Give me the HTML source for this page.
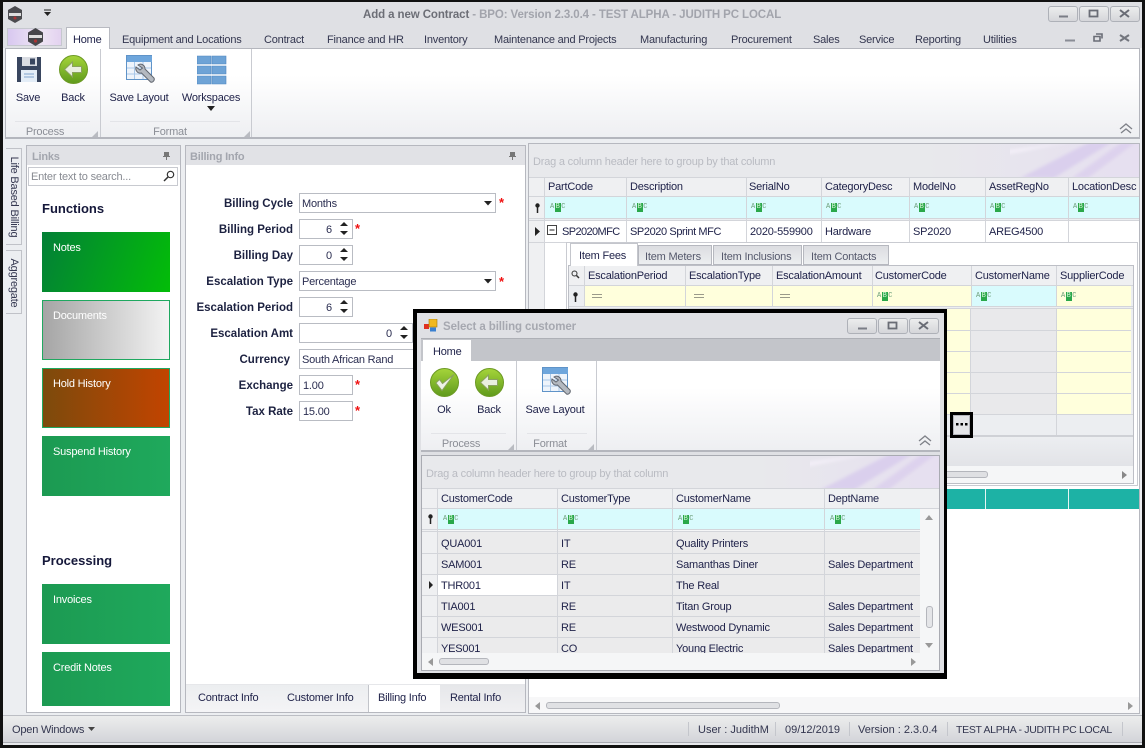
<!DOCTYPE html>
<html><head><meta charset="utf-8"><title>Add a new Contract</title>
<style>
html,body{margin:0;padding:0;background:#000}
#p{position:relative;width:1145px;height:748px;overflow:hidden;background:#eceef1;font:11px/14px "Liberation Sans",sans-serif;letter-spacing:-.2px;color:#20234a}
#p div,#p svg{position:absolute}
.t{white-space:nowrap;margin-top:1px}
.c{white-space:nowrap;text-align:center;transform:translateX(-50%);margin-top:1px}
.g{color:#8b8e96}
.lb{white-space:nowrap;font-weight:bold;font-size:11.5px;letter-spacing:0;color:#1c2140;right:852px}
.box{background:#fff;border:1px solid #b9bcc3;box-sizing:border-box;height:20px}
.in{white-space:nowrap;color:#2a2d50;margin-top:1px}
.red{color:#f01010;font-weight:bold;font-size:13px;white-space:nowrap;margin-top:1px}
.tile{left:42px;width:128px;height:60px;box-sizing:border-box;color:#fff;padding:9px 11px}
.gn{background:linear-gradient(90deg,#1c9a52,#1fa95c)}
.h{height:1px;background:#d3d5da}
.v{width:1px;background:#d3d5da}
.abc{white-space:nowrap;font:7px/9px "Liberation Mono",monospace;color:#6b9e78;letter-spacing:0;height:9px}
.abc b{display:inline-block;width:6px;height:9px;text-align:center;background:#2aa84a;color:#d8f5d8;font-weight:normal;margin:0 .5px;vertical-align:top}
.wb{border:1px solid #aeb1b8;border-radius:3px;box-sizing:border-box;background:linear-gradient(#eceded,#d5d6da);height:16px;width:30px}
.st{height:14px;width:1px;background:#c4c6cc;top:722px}
.sb{letter-spacing:0;color:#33364f}
</style></head><body><div id="p">
<svg width="0" height="0" style="left:0;top:0"><defs>
<linearGradient id="gb" x1="0" y1="0" x2="0" y2="1"><stop offset="0" stop-color="#a5d43a"/><stop offset="1" stop-color="#5f9a1c"/></linearGradient>
<filter id="bl" x="-20%" y="-20%" width="140%" height="140%"><feGaussianBlur stdDeviation="1.5"/></filter>
<g id="back"><circle cx="14.5" cy="14.5" r="14" fill="url(#gb)" stroke="#6d9a25"/><path d="M5.500 14.500 13.500 7v4.500h9v6h-9V22Z" fill="#e9efdf" stroke="#8aa25e"/></g>
<g id="ok"><circle cx="14.5" cy="14.5" r="14" fill="url(#gb)" stroke="#6d9a25"/><path d="M6 15 12 22.500 24 6.500 12.500 15.500 9.500 11.500Z" fill="#eef2e6" stroke="#8aa25e"/></g>
<g id="lay"><rect x=".5" y=".5" width="25" height="24" fill="#eef4fb" stroke="#5f93c8"/><rect x="1" y="1" width="25" height="6" fill="#6ea6dc"/><path d="M1 13H25M1 19H25M8.500 7V24M17 7V24" stroke="#a9c8e8" fill="none"/><path d="M12 10c3-2 7 0 7 4l9 9c1 2-1 5-3.500 4l-9-9c-4 1-6.500-3-5.500-6l4 3 2.500-2Z" fill="#b4b9c0" stroke="#60656e"/></g>
<g id="key"><circle cx="3.500" cy="2.500" r="2.200" fill="#222"/><path d="M3.500 4V10" stroke="#222" stroke-width="1.500"/></g>
<g id="swg" filter="url(#bl)"><path d="M10 34 80 -2H102L44 34Z" fill="#d6c8ec" opacity=".75"/><path d="M62 34 112 -2H126L78 34Z" fill="#d9ccec" opacity=".7"/><path d="M-50 12 60 -2 0 10Z" fill="#f3eff8"/></g>
</defs></svg>

<!-- frame -->
<div style="left:0;top:0;width:1145px;height:2px;background:#111"></div>
<div style="left:0;top:0;width:3px;height:748px;background:#111"></div>
<div style="left:1142px;top:0;width:3px;height:748px;background:#111"></div>
<div style="left:3px;top:2px;width:1139px;height:46px;background:#dfe0e4"></div>

<!-- titlebar -->
<svg style="left:6px;top:5px" width="18" height="19"><path d="M9 1 16 5V14L9 18 2 14V5Z" fill="#4b4b4f"/><rect x="3" y="8" width="12" height="3" fill="#ddd"/><circle cx="9" cy="13" r="1.500" fill="#a33"/></svg>
<svg style="left:43px;top:9px" width="9" height="8"><path d="M1 .5H8V1.500H1Z M1 3H8L4.500 7Z" fill="#222"/></svg>
<div class="t" style="left:363px;top:7px;font-weight:bold;color:#6c6e76;font-size:11.5px;letter-spacing:-.1px">Add a new Contract<span style="color:#a2a4ac"> - BPO: Version 2.3.0.4 - TEST ALPHA - JUDITH PC LOCAL</span></div>
<div class="wb" style="left:1048px;top:6px"></div><div class="wb" style="left:1079px;top:6px"></div><div class="wb" style="left:1110px;top:6px"></div>
<svg style="left:1048px;top:6px" width="92" height="16"><path d="M11 10.500H20" stroke="#7a7d86" stroke-width="2"/><rect x="41.500" y="4.500" width="8" height="6" fill="none" stroke="#6a6d76" stroke-width="1.800"/><path d="M72 4 81 11M81 4 72 11" stroke="#6a6d76" stroke-width="2"/></svg>
<svg style="left:1062px;top:31px" width="76" height="15"><path d="M3 9.500H13" stroke="#8a8d96" stroke-width="2"/><path d="M32 5.500H38V10H32Z M34 3H40V7.500" fill="none" stroke="#6a6d76" stroke-width="1.600"/><path d="M58 4 67 10M67 4 58 10" stroke="#73767e" stroke-width="2"/></svg>

<!-- ribbon tabs -->
<div style="left:7px;top:28px;width:55px;height:18px;background:linear-gradient(90deg,#d8c8f0,#efe6f4 60%,#e3d2f0);border:1px solid #c6c8cf;box-sizing:border-box"></div>
<svg style="left:26px;top:27px" width="19" height="20"><path d="M9.500 1 17 5.500V14.500L9.500 19 2 14.500V5.500Z" fill="#46464a"/><rect x="3" y="8" width="13" height="3" fill="#ddd"/><circle cx="9.500" cy="14" r="1.600" fill="#a33"/></svg>
<div style="left:66px;top:27px;width:44px;height:22px;background:#fff;border:1px solid #b8bac1;border-bottom:0;box-sizing:border-box;z-index:2"></div>
<div class="t" style="left:73px;top:32px;z-index:3">Home</div>
<div class="t" style="left:122px;top:32px;color:#33364f">Equipment and Locations</div>
<div class="t" style="left:264px;top:32px;color:#33364f">Contract</div>
<div class="t" style="left:327px;top:32px;color:#33364f">Finance and HR</div>
<div class="t" style="left:424px;top:32px;color:#33364f">Inventory</div>
<div class="t" style="left:494px;top:32px;color:#33364f">Maintenance and Projects</div>
<div class="t" style="left:640px;top:32px;color:#33364f">Manufacturing</div>
<div class="t" style="left:731px;top:32px;color:#33364f">Procurement</div>
<div class="t" style="left:813px;top:32px;color:#33364f">Sales</div>
<div class="t" style="left:859px;top:32px;color:#33364f">Service</div>
<div class="t" style="left:915px;top:32px;color:#33364f">Reporting</div>
<div class="t" style="left:983px;top:32px;color:#33364f">Utilities</div>

<!-- ribbon body -->
<div style="left:5px;top:48px;width:1135px;height:91px;background:linear-gradient(#fff 30%,#eeeff2);border:1px solid #b4b6bd;border-width:1px 1px 2px 1px;box-sizing:border-box"></div>
<div class="v" style="left:100px;top:49px;height:88px;background:#c9cbd1"></div>
<div class="v" style="left:251px;top:49px;height:88px;background:#c9cbd1"></div>
<div class="h" style="left:15px;top:121px;width:75px;background:#e3e4e8"></div>
<div class="h" style="left:110px;top:121px;width:130px;background:#e3e4e8"></div>
<svg style="left:16px;top:56px" width="26" height="27"><path d="M1 1H25V26H1Z" fill="#39465f"/><rect x="6" y="1" width="15" height="9" fill="#d9dce2"/><rect x="14" y="2.500" width="5" height="6" fill="#39465f"/><rect x="5" y="14" width="16" height="12" fill="#e3edf7"/><path d="M8 18H18M8 21H18" stroke="#7fa3cc"/></svg>
<svg style="left:59px;top:55px" width="30" height="30"><use href="#back"/></svg>
<svg style="left:126px;top:55px" width="30" height="30"><use href="#lay"/></svg>
<svg style="left:197px;top:55px" width="30" height="30"><path d="M0 1H14V9H0ZM15 1H29V9H15ZM0 11H14V19H0ZM15 11H29V19H15ZM0 21H14V29H0ZM15 21H29V29H15Z" fill="#6ea3d6" stroke="#4d86bf" stroke-width=".6"/></svg>
<div class="c" style="left:28px;top:90px">Save</div>
<div class="c" style="left:73px;top:90px">Back</div>
<div class="c" style="left:139px;top:90px">Save Layout</div>
<div class="c" style="left:211px;top:90px">Workspaces</div>
<svg style="left:207px;top:106px" width="9" height="6"><path d="M0 0H8L4 5Z" fill="#222"/></svg>
<div class="c g" style="left:45px;top:124px">Process</div>
<div class="c g" style="left:170px;top:124px">Format</div>
<svg style="left:91px;top:130px" width="8" height="8"><path d="M7 1V7H1Z" fill="#b9bbc1"/></svg>
<svg style="left:243px;top:130px" width="8" height="8"><path d="M7 1V7H1Z" fill="#b9bbc1"/></svg>
<svg style="left:1119px;top:123px" width="14" height="12"><path d="M1 6 7 1 13 6M2 10 7 6 12 10" fill="none" stroke="#7e8188" stroke-width="1.300"/></svg>

<!-- side tabs -->
<div style="left:6px;top:148px;width:16px;height:97px;background:#eceef1;border:1px solid #c0c2c8;border-left:0;box-sizing:border-box"></div>
<div style="left:6px;top:250px;width:16px;height:64px;background:#eceef1;border:1px solid #c0c2c8;border-left:0;box-sizing:border-box"></div>
<div class="t" style="left:14px;top:196px;transform:translate(-50%,-50%) rotate(90deg);color:#33364f">Life Based Billing</div>
<div class="t" style="left:14px;top:282px;transform:translate(-50%,-50%) rotate(90deg);color:#33364f">Aggregate</div>

<!-- links panel -->
<div style="left:26px;top:145px;width:155px;height:568px;background:#fff;border:1px solid #b6b8bf;box-sizing:border-box"></div>
<div style="left:27px;top:146px;width:153px;height:19px;background:#e1e2e6"></div>
<div class="t" style="left:32px;top:149px;font-weight:bold;color:#a3a6ae">Links</div>
<svg style="left:162px;top:151px" width="9" height="10"><path d="M2 1H7V5H8V6H5V9H4V6H1V5H2Z" fill="#777"/></svg>
<div style="left:28px;top:167px;width:150px;height:19px;background:#fff;border:1px solid #c8cad0;box-sizing:border-box"></div>
<div class="t" style="left:31px;top:169px;color:#888b92">Enter text to search...</div>
<svg style="left:163px;top:170px" width="12" height="13"><circle cx="7.500" cy="4.500" r="3.200" fill="none" stroke="#333" stroke-width="1.200"/><path d="M5 7 1 11" stroke="#333" stroke-width="1.500"/></svg>
<div class="t" style="left:42px;top:201px;font-weight:bold;font-size:13px;letter-spacing:0;color:#15183a">Functions</div>
<div class="tile" style="top:232px;background:linear-gradient(110deg,#038037,#03bd08)">Notes</div>
<div class="tile" style="top:300px;background:linear-gradient(90deg,#a5a5a5,#f3f3f3);border:1px solid #1fa860;padding:8px 10px">Documents</div>
<div class="tile" style="top:368px;background:linear-gradient(90deg,#7c4a0c,#c24400);border:1px solid #1fa860;padding:8px 10px">Hold History</div>
<div class="tile gn" style="top:436px">Suspend History</div>
<div class="t" style="left:42px;top:553px;font-weight:bold;font-size:13px;letter-spacing:0;color:#15183a">Processing</div>
<div class="tile gn" style="top:584px">Invoices</div>
<div class="tile gn" style="top:652px;height:54px">Credit Notes</div>

<!-- billing panel -->
<div style="left:185px;top:145px;width:341px;height:568px;background:#fff;border:1px solid #b6b8bf;box-sizing:border-box"></div>
<div style="left:186px;top:146px;width:339px;height:19px;background:#e1e2e6"></div>
<div class="t" style="left:190px;top:149px;font-weight:bold;color:#a3a6ae">Billing Info</div>
<svg style="left:508px;top:151px" width="9" height="10"><path d="M2 1H7V5H8V6H5V9H4V6H1V5H2Z" fill="#777"/></svg>

<div class="lb" style="top:197px">Billing Cycle</div>
<div class="lb" style="top:223px">Billing Period</div>
<div class="lb" style="top:249px">Billing Day</div>
<div class="lb" style="top:275px">Escalation Type</div>
<div class="lb" style="top:301px">Escalation Period</div>
<div class="lb" style="top:327px">Escalation Amt</div>
<div class="lb" style="top:353px;right:855px">Currency</div>
<div class="lb" style="top:379px">Exchange</div>
<div class="lb" style="top:405px">Tax Rate</div>

<div class="box" style="left:299px;top:193px;width:197px"></div><div class="in" style="left:302px;top:196px">Months</div>
<svg style="left:484px;top:201px" width="9" height="5"><path d="M0 0H8L4 4.500Z" fill="#222"/></svg>
<div class="red" style="left:499px;top:195px">*</div>
<div class="box" style="left:299px;top:219px;width:54px"></div><div class="in" style="left:326px;top:222px">6</div>
<svg style="left:340px;top:222px" width="9" height="14"><path d="M0 4 4 0 8 4ZM0 9H8L4 13Z" fill="#222"/></svg>
<div class="red" style="left:355px;top:221px">*</div>
<div class="box" style="left:299px;top:245px;width:54px"></div><div class="in" style="left:326px;top:248px">0</div>
<svg style="left:340px;top:248px" width="9" height="14"><path d="M0 4 4 0 8 4ZM0 9H8L4 13Z" fill="#222"/></svg>
<div class="box" style="left:299px;top:271px;width:197px"></div><div class="in" style="left:302px;top:274px">Percentage</div>
<svg style="left:484px;top:279px" width="9" height="5"><path d="M0 0H8L4 4.500Z" fill="#222"/></svg>
<div class="red" style="left:499px;top:274px">*</div>
<div class="box" style="left:299px;top:297px;width:54px"></div><div class="in" style="left:326px;top:300px">6</div>
<svg style="left:340px;top:300px" width="9" height="14"><path d="M0 4 4 0 8 4ZM0 9H8L4 13Z" fill="#222"/></svg>
<div class="box" style="left:299px;top:323px;width:114px"></div><div class="in" style="left:386px;top:326px">0</div>
<svg style="left:400px;top:326px" width="9" height="14"><path d="M0 4 4 0 8 4ZM0 9H8L4 13Z" fill="#222"/></svg>
<div class="box" style="left:299px;top:349px;width:197px"></div><div class="in" style="left:302px;top:352px">South African Rand</div>
<div class="box" style="left:299px;top:375px;width:54px"></div><div class="in" style="left:303px;top:378px">1.00</div>
<div class="red" style="left:355px;top:377px">*</div>
<div class="box" style="left:299px;top:401px;width:54px"></div><div class="in" style="left:303px;top:404px">15.00</div>
<div class="red" style="left:355px;top:403px">*</div>

<div style="left:186px;top:684px;width:339px;height:28px;background:#fff;border-top:1px solid #e6e7ea;box-sizing:border-box"></div>
<div style="left:186px;top:685px;width:183px;height:27px;background:linear-gradient(#eceef0,#f4f4f6);border-right:1px solid #c2c4ca;box-sizing:border-box"></div>
<div style="left:440px;top:685px;width:85px;height:27px;background:linear-gradient(#e6e7ea,#f0f0f2)"></div>
<div class="t" style="left:198px;top:690px">Contract Info</div>
<div class="t" style="left:287px;top:690px">Customer Info</div>
<div class="t" style="left:378px;top:690px">Billing Info</div>
<div class="t" style="left:450px;top:690px">Rental Info</div>

<!-- right panel -->
<div style="left:528px;top:143px;width:612px;height:571px;background:#fff;border:1px solid #b6b8bf;box-sizing:border-box"></div>
<div style="left:529px;top:144px;width:610px;height:33px;background:linear-gradient(90deg,#e8e9ec 65%,#e6dff0);overflow:hidden"></div>
<svg style="left:1010px;top:144px" width="129" height="33"><use href="#swg"/></svg>
<div class="t" style="left:533px;top:154px;color:#b9bbc2">Drag a column header here to group by that column</div>

<div style="left:529px;top:177px;width:610px;height:20px;background:#eff0f2;border-top:1px solid #d3d5da;border-bottom:1px solid #d3d5da;box-sizing:border-box"></div>
<div style="left:544px;top:197px;width:595px;height:21px;background:#d9fbfd"></div>
<div style="left:529px;top:197px;width:15px;height:21px;background:#eff0f2"></div>
<div class="h" style="left:529px;top:218px;width:610px"></div>
<div style="left:529px;top:219px;width:610px;height:2px;background:#eceef1"></div>
<div class="h" style="left:529px;top:220px;width:610px"></div>
<div style="left:529px;top:221px;width:15px;height:88px;background:#eff0f2"></div>
<div class="h" style="left:529px;top:242px;width:38px"></div>
<div class="v" style="left:544px;top:177px;height:132px"></div>
<div class="v" style="left:626px;top:177px;height:65px"></div><div class="v" style="left:746px;top:177px;height:65px"></div>
<div class="v" style="left:821px;top:177px;height:65px"></div><div class="v" style="left:909px;top:177px;height:65px"></div>
<div class="v" style="left:985px;top:177px;height:65px"></div><div class="v" style="left:1068px;top:177px;height:65px"></div>
<div class="t" style="left:548px;top:179px">PartCode</div><div class="t" style="left:630px;top:179px">Description</div>
<div class="t" style="left:749px;top:179px">SerialNo</div><div class="t" style="left:825px;top:179px">CategoryDesc</div>
<div class="t" style="left:913px;top:179px">ModelNo</div><div class="t" style="left:989px;top:179px">AssetRegNo</div>
<div class="t" style="left:1072px;top:179px">LocationDesc</div>
<svg style="left:534px;top:203px" width="8" height="11"><use href="#key"/></svg>
<div class="abc" style="left:550px;top:203px">A<b>B</b>C</div><div class="abc" style="left:632px;top:203px">A<b>B</b>C</div>
<div class="abc" style="left:751px;top:203px">A<b>B</b>C</div><div class="abc" style="left:826px;top:203px">A<b>B</b>C</div>
<div class="abc" style="left:914px;top:203px">A<b>B</b>C</div><div class="abc" style="left:990px;top:203px">A<b>B</b>C</div>
<div class="abc" style="left:1073px;top:203px">A<b>B</b>C</div>
<svg style="left:535px;top:227px" width="6" height="9"><path d="M0 0 5 4.500 0 9Z" fill="#222"/></svg>
<svg style="left:547px;top:225px" width="11" height="11"><rect x=".5" y=".5" width="9" height="9" fill="#fff" stroke="#444"/><path d="M2.500 5H7.500" stroke="#222"/></svg>
<div class="t" style="left:562px;top:224px;letter-spacing:-.6px">SP2020MFC</div><div class="t" style="left:630px;top:224px;letter-spacing:-.4px">SP2020 Sprint MFC</div>
<div class="t" style="left:750px;top:224px">2020-559900</div><div class="t" style="left:825px;top:224px">Hardware</div>
<div class="t" style="left:913px;top:224px">SP2020</div><div class="t" style="left:989px;top:224px">AREG4500</div>

<!-- detail -->
<div style="left:566px;top:242px;width:572px;height:244px;background:#fff;border:1px solid #c9cbd1;box-sizing:border-box"></div>
<div style="left:638px;top:245px;width:74px;height:20px;background:linear-gradient(#dcdde1,#eceef0);border:1px solid #b6b8bf;box-sizing:border-box"></div>
<div style="left:713px;top:245px;width:89px;height:20px;background:linear-gradient(#dcdde1,#eceef0);border:1px solid #b6b8bf;box-sizing:border-box"></div>
<div style="left:803px;top:245px;width:86px;height:20px;background:linear-gradient(#dcdde1,#eceef0);border:1px solid #b6b8bf;box-sizing:border-box"></div>
<div style="left:570px;top:243px;width:68px;height:23px;background:#fff;border:1px solid #c4c6cc;border-bottom:0;box-sizing:border-box;z-index:1"></div>
<div class="t" style="left:579px;top:248px;z-index:2">Item Fees</div>
<div class="t g" style="left:645px;top:249px;color:#55586c">Item Meters</div>
<div class="t" style="left:721px;top:249px;color:#55586c">Item Inclusions</div>
<div class="t" style="left:811px;top:249px;color:#55586c">Item Contacts</div>

<div style="left:568px;top:265px;width:566px;height:219px;background:#eceef1;border:1px solid #bdbfc6;box-sizing:border-box"></div>
<div style="left:569px;top:266px;width:564px;height:20px;background:#eff0f2;border-bottom:1px solid #d3d5da;box-sizing:border-box"></div>
<div style="left:584px;top:286px;width:547px;height:20px;background:#ffffdc"></div>
<div style="left:972px;top:286px;width:84px;height:20px;background:#d9fbfd"></div>
<div class="v" style="left:584px;top:266px;height:40px"></div><div class="v" style="left:685px;top:266px;height:40px"></div>
<div class="v" style="left:772px;top:266px;height:40px"></div><div class="v" style="left:872px;top:266px;height:40px"></div>
<div class="v" style="left:971px;top:266px;height:40px"></div><div class="v" style="left:1056px;top:266px;height:40px"></div>
<div class="t" style="left:588px;top:268px">EscalationPeriod</div><div class="t" style="left:689px;top:268px">EscalationType</div>
<div class="t" style="left:776px;top:268px">EscalationAmount</div><div class="t" style="left:875px;top:268px">CustomerCode</div>
<div class="t" style="left:975px;top:268px">CustomerName</div><div class="t" style="left:1060px;top:268px">SupplierCode</div>
<svg style="left:571px;top:270px" width="9" height="9"><circle cx="3.500" cy="3.500" r="2.500" fill="none" stroke="#333"/><path d="M5.500 5.500 8 8" stroke="#333" stroke-width="1.500"/></svg>
<svg style="left:572px;top:292px" width="8" height="11"><use href="#key"/></svg>
<svg style="left:592px;top:294px" width="200" height="5"><path d="M0 .5H10M0 3.500H10M102 .5H112M102 3.500H112M188 .5H198M188 3.500H198" stroke="#9a9a8a"/></svg>
<div class="abc" style="left:877px;top:292px">A<b>B</b>C</div><div class="abc" style="left:976px;top:292px">A<b>B</b>C</div><div class="abc" style="left:1061px;top:292px">A<b>B</b>C</div>
<div style="left:569px;top:309px;width:401px;height:105px;background:#ffffdc"></div>
<div style="left:971px;top:309px;width:85px;height:105px;background:#e9e9eb"></div>
<div style="left:1057px;top:309px;width:74px;height:105px;background:#ffffdc"></div>
<div class="h" style="left:569px;top:306px;width:564px"></div><div class="h" style="left:569px;top:308px;width:564px"></div>
<div class="h" style="left:569px;top:330px;width:562px"></div><div class="h" style="left:569px;top:351px;width:562px"></div>
<div class="h" style="left:569px;top:372px;width:562px"></div><div class="h" style="left:569px;top:393px;width:562px"></div>
<div class="h" style="left:569px;top:414px;width:564px"></div>
<div class="v" style="left:970px;top:309px;height:126px"></div><div class="v" style="left:1056px;top:309px;height:126px"></div>
<div style="left:569px;top:435px;width:564px;height:2px;background:#cfd1d6"></div>
<div style="left:569px;top:437px;width:564px;height:29px;background:linear-gradient(#eceef1,#e2e3e7)"></div>
<div style="left:569px;top:466px;width:564px;height:17px;background:#f5f6f7"></div>
<div style="left:800px;top:471px;width:188px;height:7px;background:#dfe0e3;border:1px solid #b4b6bc;border-radius:3px;box-sizing:border-box"></div>
<svg style="left:1122px;top:471px" width="6" height="8"><path d="M0 0 5 4 0 8Z" fill="#888"/></svg>
<div style="left:529px;top:489px;width:610px;height:20px;background:#1db2a5"></div>
<div class="v" style="left:985px;top:489px;height:20px;background:#e6f5f3"></div><div class="v" style="left:1068px;top:489px;height:20px;background:#e6f5f3"></div>
<div style="left:529px;top:697px;width:610px;height:16px;background:#f7f7f8"></div>
<div style="left:546px;top:702px;width:234px;height:7px;background:#e0e1e4;border:1px solid #b4b6bc;border-radius:3px;box-sizing:border-box"></div>
<svg style="left:535px;top:702px" width="6" height="8"><path d="M5 0 0 4 5 8Z" fill="#999"/></svg>
<svg style="left:1128px;top:702px" width="6" height="8"><path d="M0 0 5 4 0 8Z" fill="#999"/></svg>

<!-- ... button -->
<div style="left:950px;top:412px;width:23px;height:26px;background:#000"></div>
<div style="left:953px;top:415px;width:17px;height:20px;background:#e4e5e8;border:1px solid #b5b7bd;box-sizing:border-box"></div>
<svg style="left:956px;top:423px" width="12" height="4"><path d="M0 0H2.500V2.500H0ZM4.500 0H7V2.500H4.500ZM9 0H11.500V2.500H9Z" fill="#000"/></svg>

<!-- status bar -->
<div style="left:3px;top:715px;width:1139px;height:28px;background:linear-gradient(#eceded,#d3d4d9);border-top:1px solid #bcbec4;border-bottom:1px solid #a9abb2;box-sizing:border-box"></div>
<div style="left:0;top:745px;width:1145px;height:3px;background:#111"></div>
<div style="left:3px;top:743px;width:1139px;height:2px;background:#e8e9ec"></div>
<div class="t" style="left:12px;top:722px;color:#33364f">Open Windows</div>
<svg style="left:88px;top:727px" width="7" height="5"><path d="M0 0H7L3.500 4Z" fill="#444"/></svg>
<div class="st" style="left:688px"></div><div class="st" style="left:775px"></div><div class="st" style="left:849px"></div><div class="st" style="left:947px"></div><div class="st" style="left:1122px"></div>
<div class="t sb" style="left:698px;top:722px">User : JudithM</div>
<div class="t sb" style="left:785px;top:722px">09/12/2019</div>
<div class="t sb" style="left:858px;top:722px">Version : 2.3.0.4</div>
<div class="t sb" style="left:956px;top:722px;font-size:10.5px;letter-spacing:-.3px">TEST ALPHA - JUDITH PC LOCAL</div>

<!-- dialog -->
<div style="left:413px;top:309px;width:534px;height:370px;background:#000"></div>
<div style="left:417px;top:313px;width:527px;height:360px;background:#dfe0e4"></div>
<svg style="left:424px;top:319px" width="14" height="14"><rect x="0" y="5" width="5" height="5" fill="#e03020"/><rect x="5" y="0" width="8" height="8" fill="#f0b820" stroke="#a87808" stroke-width=".6"/><rect x="6" y="8.500" width="6" height="4" fill="#3a80d0"/></svg>
<div class="t" style="left:443px;top:319px;font-weight:bold;color:#a6a8b0;font-size:11.5px;letter-spacing:-.1px">Select a billing customer</div>
<div class="wb" style="left:847px;top:318px"></div><div class="wb" style="left:878px;top:318px"></div><div class="wb" style="left:909px;top:318px"></div>
<svg style="left:847px;top:318px" width="92" height="16"><path d="M11 10.500H20" stroke="#7a7d86" stroke-width="2"/><rect x="41.500" y="4.500" width="8" height="6" fill="none" stroke="#6a6d76" stroke-width="1.800"/><path d="M72 4 81 11M81 4 72 11" stroke="#6a6d76" stroke-width="2"/></svg>
<div style="left:421px;top:338px;width:519px;height:23px;background:#c3c5ca;border-top:1px solid #aeb0b6;box-sizing:border-box"></div>
<div style="left:423px;top:340px;width:48px;height:22px;background:#fff"></div>
<div class="t" style="left:433px;top:344px">Home</div>
<div style="left:421px;top:361px;width:519px;height:91px;background:linear-gradient(#fff 30%,#eeeff2);border-bottom:2px solid #b4b6bd;box-sizing:border-box"></div>
<div class="v" style="left:516px;top:361px;height:89px;background:#c9cbd1"></div><div class="v" style="left:596px;top:361px;height:89px;background:#c9cbd1"></div>
<div class="h" style="left:431px;top:433px;width:75px;background:#e3e4e8"></div><div class="h" style="left:527px;top:433px;width:60px;background:#e3e4e8"></div>
<svg style="left:430px;top:368px" width="30" height="30"><use href="#ok"/></svg>
<svg style="left:475px;top:368px" width="30" height="30"><use href="#back"/></svg>
<svg style="left:542px;top:367px" width="30" height="30"><use href="#lay"/></svg>
<div class="c" style="left:444px;top:402px">Ok</div><div class="c" style="left:489px;top:402px">Back</div><div class="c" style="left:555px;top:402px">Save Layout</div>
<div class="c g" style="left:461px;top:436px">Process</div><div class="c g" style="left:550px;top:436px">Format</div>
<svg style="left:507px;top:443px" width="8" height="8"><path d="M7 1V7H1Z" fill="#b9bbc1"/></svg>
<svg style="left:587px;top:443px" width="8" height="8"><path d="M7 1V7H1Z" fill="#b9bbc1"/></svg>
<svg style="left:918px;top:435px" width="14" height="12"><path d="M1 6 7 1 13 6M2 10 7 6 12 10" fill="none" stroke="#7e8188" stroke-width="1.300"/></svg>

<div style="left:421px;top:455px;width:519px;height:216px;background:#f5f6f7;border:1px solid #a9abb2;box-sizing:border-box"></div>
<div style="left:422px;top:456px;width:517px;height:32px;background:linear-gradient(90deg,#e8e9ec 65%,#e6dff0)"></div>
<svg style="left:810px;top:456px" width="129" height="32"><use href="#swg"/></svg>
<div class="t" style="left:426px;top:466px;color:#b9bbc2">Drag a column header here to group by that column</div>
<div style="left:422px;top:488px;width:517px;height:21px;background:#eff0f2;border-top:1px solid #d3d5da;border-bottom:1px solid #d3d5da;box-sizing:border-box"></div>
<div style="left:437px;top:509px;width:483px;height:20px;background:#d9fbfd"></div>
<div style="left:422px;top:509px;width:15px;height:144px;background:#eff0f2"></div>
<div class="t" style="left:441px;top:491px">CustomerCode</div><div class="t" style="left:561px;top:491px">CustomerType</div>
<div class="t" style="left:676px;top:491px">CustomerName</div><div class="t" style="left:828px;top:491px">DeptName</div>
<svg style="left:427px;top:514px" width="8" height="11"><use href="#key"/></svg>
<div class="abc" style="left:443px;top:515px">A<b>B</b>C</div><div class="abc" style="left:563px;top:515px">A<b>B</b>C</div>
<div class="abc" style="left:678px;top:515px">A<b>B</b>C</div><div class="abc" style="left:830px;top:515px">A<b>B</b>C</div>
<div class="h" style="left:422px;top:529px;width:498px"></div><div class="h" style="left:422px;top:531px;width:498px"></div>
<div style="left:437px;top:532px;width:483px;height:121px;background:#ebebec"></div>
<div style="left:438px;top:575px;width:119px;height:20px;background:#fff"></div>
<div class="h" style="left:422px;top:553px;width:498px"></div><div class="h" style="left:422px;top:574px;width:498px"></div>
<div class="h" style="left:422px;top:595px;width:498px"></div><div class="h" style="left:422px;top:616px;width:498px"></div>
<div class="h" style="left:422px;top:637px;width:498px"></div>
<div class="v" style="left:437px;top:488px;height:165px"></div><div class="v" style="left:557px;top:488px;height:165px"></div>
<div class="v" style="left:672px;top:488px;height:165px"></div><div class="v" style="left:824px;top:488px;height:165px"></div>
<div class="t" style="left:441px;top:536px">QUA001</div><div class="t" style="left:561px;top:536px">IT</div><div class="t" style="left:676px;top:536px">Quality Printers</div>
<div class="t" style="left:441px;top:557px">SAM001</div><div class="t" style="left:561px;top:557px">RE</div><div class="t" style="left:676px;top:557px">Samanthas Diner</div><div class="t" style="left:828px;top:557px">Sales Department</div>
<div class="t" style="left:441px;top:578px">THR001</div><div class="t" style="left:561px;top:578px">IT</div><div class="t" style="left:676px;top:578px">The Real</div>
<div class="t" style="left:441px;top:599px">TIA001</div><div class="t" style="left:561px;top:599px">RE</div><div class="t" style="left:676px;top:599px">Titan Group</div><div class="t" style="left:828px;top:599px">Sales Department</div>
<div class="t" style="left:441px;top:620px">WES001</div><div class="t" style="left:561px;top:620px">RE</div><div class="t" style="left:676px;top:620px">Westwood Dynamic</div><div class="t" style="left:828px;top:620px">Sales Department</div>
<div style="left:422px;top:641px;width:498px;height:12px;overflow:hidden">
<div class="t" style="left:19px;top:0">YES001</div><div class="t" style="left:139px;top:0">CO</div><div class="t" style="left:254px;top:0">Young Electric</div><div class="t" style="left:406px;top:0">Sales Department</div>
</div>
<svg style="left:429px;top:581px" width="5" height="8"><path d="M0 0 4 4 0 8Z" fill="#222"/></svg>
<div style="left:422px;top:653px;width:517px;height:17px;background:#f5f6f7"></div>
<div style="left:439px;top:658px;width:50px;height:7px;background:#e0e1e4;border:1px solid #b4b6bc;border-radius:3px;box-sizing:border-box"></div>
<svg style="left:428px;top:658px" width="6" height="8"><path d="M5 0 0 4 5 8Z" fill="#999"/></svg>
<svg style="left:911px;top:658px" width="6" height="8"><path d="M0 0 5 4 0 8Z" fill="#999"/></svg>
<div style="left:926px;top:606px;width:7px;height:22px;background:#e4e5e8;border:1px solid #b4b6bc;border-radius:3px;box-sizing:border-box"></div>
<svg style="left:925px;top:515px" width="9" height="5"><path d="M0 5 4 0 8 5Z" fill="#999"/></svg>
<svg style="left:925px;top:643px" width="9" height="5"><path d="M0 0H8L4 5Z" fill="#999"/></svg>
</div></body></html>
